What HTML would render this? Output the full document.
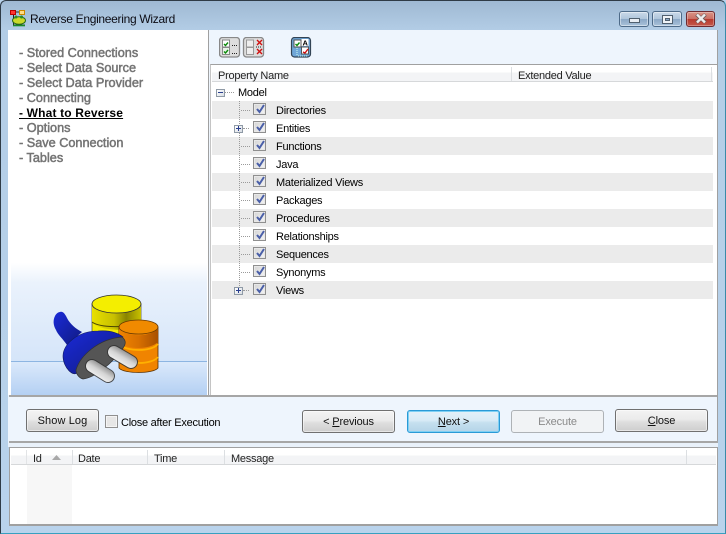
<!DOCTYPE html>
<html><head><meta charset="utf-8"><style>
html,body{margin:0;padding:0;width:726px;height:534px;overflow:hidden;background:#b9d3ec}
*{box-sizing:border-box}
body{font-family:"Liberation Sans",sans-serif;font-size:11px;letter-spacing:-.25px;color:#000;position:relative}
.a{position:absolute}
.t{position:absolute;white-space:nowrap;line-height:14px}
.step{position:absolute;left:19px;white-space:nowrap;font-size:12.7px;line-height:15px;color:#747474;letter-spacing:0;-webkit-text-stroke:.5px #747474}
.row{position:absolute;left:212px;width:501px;height:18px}
.g{background:#ebebeb}
.cb{position:absolute;left:253px;width:13px;height:12px;background:linear-gradient(135deg,#d4d4d4,#f4f4f4);border:1px solid #8f8f8f;box-shadow:inset 0 0 0 1px #e8e8e8}
.cb svg{position:absolute;left:1px;top:0}
.lb{position:absolute;left:276px;white-space:nowrap;line-height:14px}
.dh{position:absolute;left:241px;width:9px;height:0;border-top:1px dotted #9a9a9a}
.btn{position:absolute;height:23px;border:1px solid #707070;border-radius:3px;background:linear-gradient(#f3f3f3 0,#ebebeb 45%,#dfdfdf 55%,#cdcdcd 100%);box-shadow:inset 0 0 0 1px rgba(255,255,255,.5);text-align:center;line-height:22px;color:#111;letter-spacing:-.15px}
.pm{position:absolute;width:9px;height:8px;border:1px solid #8f9aa6;background:linear-gradient(135deg,#fff,#d8dde4)}
.pm i{position:absolute;left:1px;top:2px;width:5px;height:1px;background:#2a3f8f}
.pm b{position:absolute;left:3px;top:0;width:1px;height:5px;background:#2a3f8f}
.hd{position:absolute;white-space:nowrap;line-height:14px;color:#222}
</style></head><body>

<!-- window frame -->
<div class="a" style="left:0;top:0;width:726px;height:534px;background:linear-gradient(#9fb9d3 0,#b3cde6 30px,#b9d3ec 100%);border:1px solid #2f3b46;border-radius:6px 6px 0 0;border-right-color:#3a8aa8;border-bottom-color:#38a0c0"></div>

<!-- title icon -->
<svg class="a" style="left:9px;top:9px" width="18" height="18" viewBox="0 0 18 18">
<path d="M4.500 6V16M4.500 16H16" stroke="#222" fill="none"/>
<rect x="1.500" y="1.500" width="5" height="4" fill="#f33" stroke="#b00"/>
<rect x="10.500" y="1.500" width="5" height="4" fill="#fd8" stroke="#c80"/>
<path d="M7 3h3" stroke="#333"/>
<ellipse cx="10" cy="11.500" rx="6.500" ry="3.800" fill="#c9d92a" stroke="#2a6a1a"/>
<path d="M4 16.500h12" stroke="#1a8a2a" stroke-width="1.600"/>
<circle cx="7" cy="8" r="1.500" fill="#2a8a2a"/><circle cx="12.500" cy="8" r="1.500" fill="#2a8a2a"/>
</svg>
<div class="t" style="left:30px;top:12px;font-size:12px;letter-spacing:-.3px;color:#0c0c14">Reverse Engineering Wizard</div>

<!-- window buttons -->
<div class="a" style="left:619px;top:11px;width:30px;height:16px;border:1px solid #4d6a88;border-radius:3px;background:linear-gradient(#c9d9e9 0,#b0c6dc 48%,#8ba8c6 52%,#a9c2da 100%);box-shadow:inset 0 0 0 1px rgba(255,255,255,.45)"></div>
<div class="a" style="left:629px;top:18px;width:11px;height:5px;background:#e8edf3;border:1px solid #50606f"></div>
<div class="a" style="left:652px;top:11px;width:30px;height:16px;border:1px solid #4d6a88;border-radius:3px;background:linear-gradient(#c9d9e9 0,#b0c6dc 48%,#8ba8c6 52%,#a9c2da 100%);box-shadow:inset 0 0 0 1px rgba(255,255,255,.45)"></div>
<div class="a" style="left:662px;top:15px;width:11px;height:9px;background:#eef2f6;border:1px solid #50606f"></div>
<div class="a" style="left:665px;top:18px;width:5px;height:3px;background:#8ba8c6;border:1px solid #50606f"></div>
<div class="a" style="left:686px;top:11px;width:29px;height:16px;border:1px solid #6e2a30;border-radius:3px;background:linear-gradient(#d99385 0,#cc7166 48%,#b83a2e 52%,#c4594c 100%);box-shadow:inset 0 0 0 1px rgba(255,255,255,.3)"></div>
<svg class="a" style="left:694px;top:13px" width="14" height="11" viewBox="0 0 14 11"><path d="M2.500 1.500L11.500 9.500M11.500 1.500L2.500 9.500" stroke="#6a5a5a" stroke-width="3.800"/><path d="M3 1.500L11 9.500M11 1.500L3 9.500" stroke="#eeeeee" stroke-width="2.400"/></svg>

<!-- main client -->
<div class="a" style="left:8px;top:30px;width:709px;height:413px;background:#eef5fd"></div>

<!-- left panel -->
<div class="a" style="left:8px;top:30px;width:200px;height:365px;background:#fff"></div>
<div class="a" style="left:11px;top:263px;width:196px;height:98px;background:linear-gradient(#ffffff 0,#eaf2fc 20px,#d5e5f9 98px)"></div>
<div class="a" style="left:11px;top:361px;width:196px;height:1px;background:#8db5e2"></div>
<div class="a" style="left:11px;top:362px;width:196px;height:33px;background:linear-gradient(#dbe9fb,#b4d0f3)"></div>
<div class="a" style="left:208px;top:30px;width:1px;height:366px;background:#a0a0a0"></div>
<div class="a" style="left:717px;top:30px;width:1px;height:413px;background:#a0a0a0"></div>

<div class="step" style="top:46px">- Stored Connections</div>
<div class="step" style="top:61px">- Select Data Source</div>
<div class="step" style="top:76px">- Select Data Provider</div>
<div class="step" style="top:91px">- Connecting</div>
<div class="step" style="top:106px;color:#000;-webkit-text-stroke:0;font-weight:bold;font-size:12px;letter-spacing:.16px;text-decoration:underline">- What to Reverse</div>
<div class="step" style="top:121px">- Options</div>
<div class="step" style="top:136px">- Save Connection</div>
<div class="step" style="top:151px">- Tables</div>

<!-- plug + databases -->
<svg class="a" style="left:50px;top:290px" width="115" height="95" viewBox="0 0 115 95">
<defs>
<linearGradient id="y" x1="0" x2="1"><stop offset="0" stop-color="#e8e000"/><stop offset=".45" stop-color="#c8c000"/><stop offset=".7" stop-color="#8a8400"/><stop offset="1" stop-color="#c8c000"/></linearGradient>
<linearGradient id="o" x1="0" x2="1"><stop offset="0" stop-color="#f08400"/><stop offset=".5" stop-color="#d87000"/><stop offset="1" stop-color="#a85000"/></linearGradient>
<linearGradient id="p" x1="0" x2="1" y1="0" y2="1"><stop offset="0" stop-color="#1a2ad8"/><stop offset="1" stop-color="#101a80"/></linearGradient>
<linearGradient id="s" x1="0" x2="1" y1="1" y2="0"><stop offset="0" stop-color="#f6f6f6"/><stop offset=".5" stop-color="#d4d4d4"/><stop offset="1" stop-color="#808080"/></linearGradient>
</defs>
<path d="M42 14V44H91V14Z" fill="#f0ea00" stroke="#444" stroke-width=".7"/>
<path d="M42 14C44 26 89 26 91 14V34C86 42 48 42 42 32Z" fill="url(#y)"/>
<path d="M42 32C50 38 78 38 90 33" stroke="#4a4600" fill="none" stroke-width="1"/>
<ellipse cx="66.500" cy="14" rx="24.500" ry="9" fill="#f4ee00" stroke="#333" stroke-width=".8"/>
<path d="M69 37V78C74 84 103 84 108 78V37Z" fill="#f08400" stroke="#5a3000" stroke-width=".8"/>
<path d="M69 37C74 48 103 48 108 37V52C100 60 76 60 69 52Z" fill="url(#o)"/>
<path d="M69 54C76 62 102 62 108 54M69 67C76 75 102 75 108 67" stroke="#ffb000" fill="none" stroke-width="1.800"/>
<ellipse cx="88.500" cy="37" rx="19.500" ry="7" fill="#f08a00" stroke="#6a3a00" stroke-width=".8"/>
<path d="M10 22C13 21 15 24 17 28C20 34 26 39 32 42L17 55C13 49 8 45 6 40C3 35 3 30 5 26C6 24 8 22 10 22Z" fill="url(#p)"/>
<path d="M13 66C13 54 28 41 48 41C60 40 68 43 73 47C55 55 38 68 28 82C24 88 13 78 13 66Z" fill="url(#p)" stroke="#101a60" stroke-width=".6"/>
<path d="M26 80C30 66 48 49 72 47C76 50 76 54 73 58C62 74 44 88 33 89C29 88 26 84 26 80Z" fill="#555" stroke="#333" stroke-width=".7"/>
<path d="M42 76L58 86" stroke="#333" stroke-width="14" stroke-linecap="round" opacity=".85"/>
<path d="M42 76L58 86" stroke="url(#s)" stroke-width="12" stroke-linecap="round"/>
<path d="M64 62L81 72" stroke="#333" stroke-width="14" stroke-linecap="round" opacity=".85"/>
<path d="M64 62L81 72" stroke="url(#s)" stroke-width="12" stroke-linecap="round"/>
</svg>

<!-- toolbar -->
<svg class="a" style="left:219px;top:37px" width="95" height="21" viewBox="0 0 95 21">
<rect x=".5" y=".5" width="20" height="19.500" rx="3" fill="#ddd" stroke="#888" stroke-width="1.300"/>
<rect x="3.500" y="3" width="7" height="7" fill="#fff" stroke="#888"/><rect x="3.500" y="10.500" width="7" height="7" fill="#eaf5ea" stroke="#888"/>
<path d="M5 7l1.500 1.500 2.500-3M5 14.500l1.500 1.500 2.500-3" stroke="#0a8a0a" fill="none" stroke-width="1.400"/>
<path d="M13 8.500h6M13 16.500h6" stroke="#222" stroke-dasharray="1 1"/>
<rect x="24.500" y=".5" width="20" height="19.500" rx="3" fill="#ddd" stroke="#888" stroke-width="1.300"/>
<rect x="27.500" y="3" width="7" height="7" fill="#eee" stroke="#999"/><rect x="27.500" y="10.500" width="7" height="7" fill="#eee" stroke="#999"/>
<path d="M38 3l5 5M43 3l-5 5M38 12l5 5M43 12l-5 5" stroke="#d01010" stroke-width="1.400"/>
<path d="M37 10h6" stroke="#222" stroke-dasharray="1 1"/>
<rect x="72.500" y=".5" width="19" height="19.500" rx="3" fill="#6fa6d8" stroke="#345" stroke-width="1.200"/>
<rect x="75" y="3" width="7" height="7" fill="#fff" stroke="#555"/><path d="M76.500 7l1.500 1.500 2.500-3" stroke="#0a8a0a" fill="none" stroke-width="1.400"/>
<rect x="82.500" y="10" width="7" height="7" fill="#fff" stroke="#555"/><path d="M84 15l2 1 3-4" stroke="#d01010" fill="none" stroke-width="1.400"/>
<rect x="82.500" y="2" width="7" height="7" fill="#fff"/><text x="83.500" y="8.300" font-size="7.500" font-weight="bold" font-family="Liberation Sans" fill="#000">A</text>
<path d="M78 11v8M79 19h10" stroke="#cfe" stroke-dasharray="1 1"/>
</svg>

<!-- property grid -->
<div class="a" style="left:210px;top:64px;width:507px;height:332px;background:#fff;border-top:1px solid #a0a0a0;border-left:1px solid #c4c4c4"></div>
<div class="a" style="left:9px;top:395px;width:708px;height:2px;background:#a6a6a6"></div>
<div class="a" style="left:212px;top:66px;width:501px;height:16px;background:linear-gradient(#fff 0,#fff 6px,#f3f4f6 7px,#f3f4f6 100%);border-bottom:1px solid #d6d8da"></div>
<div class="a" style="left:511px;top:67px;width:1px;height:14px;background:#dcdfe2"></div>
<div class="a" style="left:711px;top:67px;width:1px;height:14px;background:#dcdfe2"></div>
<div class="hd" style="left:218px;top:69px">Property Name</div>
<div class="hd" style="left:518px;top:69px">Extended Value</div>

<div class="row g" style="top:101px"></div>
<div class="row g" style="top:137px"></div>
<div class="row g" style="top:173px"></div>
<div class="row g" style="top:209px"></div>
<div class="row g" style="top:245px"></div>
<div class="row g" style="top:281px"></div>

<!-- tree lines -->
<div class="a" style="left:239px;top:101px;width:0;height:185px;border-left:1px dotted #9a9a9a"></div>
<div class="a" style="left:225px;top:92px;width:9px;border-top:1px dotted #9a9a9a"></div>
<div class="pm" style="left:216px;top:89px"><i></i></div>
<div class="lb" style="left:238px;top:86px">Model</div>

<div class="dh" style="top:110px"></div><div class="dh" style="top:146px"></div><div class="dh" style="top:164px"></div><div class="dh" style="top:182px"></div><div class="dh" style="top:200px"></div><div class="dh" style="top:218px"></div><div class="dh" style="top:236px"></div><div class="dh" style="top:254px"></div><div class="dh" style="top:272px"></div>
<div class="dh" style="top:128px;left:243px;width:6px"></div><div class="dh" style="top:290px;left:243px;width:6px"></div>
<div class="pm" style="left:234px;top:125px"><i></i><b></b></div>
<div class="pm" style="left:234px;top:287px"><i></i><b></b></div>

<div class="cb" style="top:103px"><svg width="11" height="10"><path d="M2 5l2.500 3L9 1" stroke="#4a5fa8" stroke-width="2" fill="none"/></svg></div><div class="lb" style="top:104px">Directories</div>
<div class="cb" style="top:121px"><svg width="11" height="10"><path d="M2 5l2.500 3L9 1" stroke="#4a5fa8" stroke-width="2" fill="none"/></svg></div><div class="lb" style="top:122px">Entities</div>
<div class="cb" style="top:139px"><svg width="11" height="10"><path d="M2 5l2.500 3L9 1" stroke="#4a5fa8" stroke-width="2" fill="none"/></svg></div><div class="lb" style="top:140px">Functions</div>
<div class="cb" style="top:157px"><svg width="11" height="10"><path d="M2 5l2.500 3L9 1" stroke="#4a5fa8" stroke-width="2" fill="none"/></svg></div><div class="lb" style="top:158px">Java</div>
<div class="cb" style="top:175px"><svg width="11" height="10"><path d="M2 5l2.500 3L9 1" stroke="#4a5fa8" stroke-width="2" fill="none"/></svg></div><div class="lb" style="top:176px">Materialized Views</div>
<div class="cb" style="top:193px"><svg width="11" height="10"><path d="M2 5l2.500 3L9 1" stroke="#4a5fa8" stroke-width="2" fill="none"/></svg></div><div class="lb" style="top:194px">Packages</div>
<div class="cb" style="top:211px"><svg width="11" height="10"><path d="M2 5l2.500 3L9 1" stroke="#4a5fa8" stroke-width="2" fill="none"/></svg></div><div class="lb" style="top:212px">Procedures</div>
<div class="cb" style="top:229px"><svg width="11" height="10"><path d="M2 5l2.500 3L9 1" stroke="#4a5fa8" stroke-width="2" fill="none"/></svg></div><div class="lb" style="top:230px">Relationships</div>
<div class="cb" style="top:247px"><svg width="11" height="10"><path d="M2 5l2.500 3L9 1" stroke="#4a5fa8" stroke-width="2" fill="none"/></svg></div><div class="lb" style="top:248px">Sequences</div>
<div class="cb" style="top:265px"><svg width="11" height="10"><path d="M2 5l2.500 3L9 1" stroke="#4a5fa8" stroke-width="2" fill="none"/></svg></div><div class="lb" style="top:266px">Synonyms</div>
<div class="cb" style="top:283px"><svg width="11" height="10"><path d="M2 5l2.500 3L9 1" stroke="#4a5fa8" stroke-width="2" fill="none"/></svg></div><div class="lb" style="top:284px">Views</div>

<!-- bottom bar -->
<div class="btn" style="left:26px;top:409px;width:73px;letter-spacing:.1px">Show Log</div>
<div class="a" style="left:105px;top:415px;width:13px;height:13px;border:1px solid #8f8f8f;background:#e6e6e6;box-shadow:inset 0 0 0 1px #f4f4f4"></div>
<div class="t" style="left:121px;top:416px">Close after Execution</div>
<div class="btn" style="left:302px;top:410px;width:93px">&lt; <u>P</u>revious</div>
<div class="btn" style="left:407px;top:410px;width:93px;border:1px solid #2a9ad6;background:linear-gradient(#e4f1f9 0,#d8ebf6 45%,#c6e0ef 55%,#b4d4e8 100%);box-shadow:inset 0 0 0 1px #7fd0f4"><u>N</u>ext &gt;</div>
<div class="btn" style="left:511px;top:410px;width:93px;border-color:#aeb2b6;background:#f1f3f5;box-shadow:none;color:#8a8a8a">Execute</div>
<div class="btn" style="left:615px;top:409px;width:93px"><u>C</u>lose</div>
<div class="a" style="left:9px;top:441px;width:709px;height:2px;background:#a6a6a6"></div>

<!-- log area -->
<div class="a" style="left:8px;top:443px;width:710px;height:4px;background:#e9f1fa"></div>
<div class="a" style="left:9px;top:447px;width:709px;height:79px;background:#fff;border:1px solid #a0a0a0;border-bottom:2px solid #a0a0a0"></div>
<div class="a" style="left:11px;top:449px;width:705px;height:16px;background:linear-gradient(#fff 0,#fff 6px,#f3f4f6 7px,#f3f4f6 100%);border-bottom:1px solid #d6d8da"></div>
<div class="a" style="left:27px;top:465px;width:45px;height:59px;background:#f7f7f7"></div>
<div class="a" style="left:26px;top:450px;width:1px;height:14px;background:#e2e4e6"></div>
<div class="a" style="left:72px;top:450px;width:1px;height:14px;background:#dcdfe2"></div>
<div class="a" style="left:147px;top:450px;width:1px;height:14px;background:#dcdfe2"></div>
<div class="a" style="left:224px;top:450px;width:1px;height:14px;background:#dcdfe2"></div>
<div class="a" style="left:686px;top:450px;width:1px;height:14px;background:#dcdfe2"></div>
<div class="hd" style="left:33px;top:452px">Id</div>
<svg class="a" style="left:51px;top:454px" width="12" height="7"><path d="M1 6L5.500 1L10 6Z" fill="#a8a8a8"/></svg>
<div class="hd" style="left:78px;top:452px">Date</div>
<div class="hd" style="left:154px;top:452px">Time</div>
<div class="hd" style="left:231px;top:452px">Message</div>
</body></html>
